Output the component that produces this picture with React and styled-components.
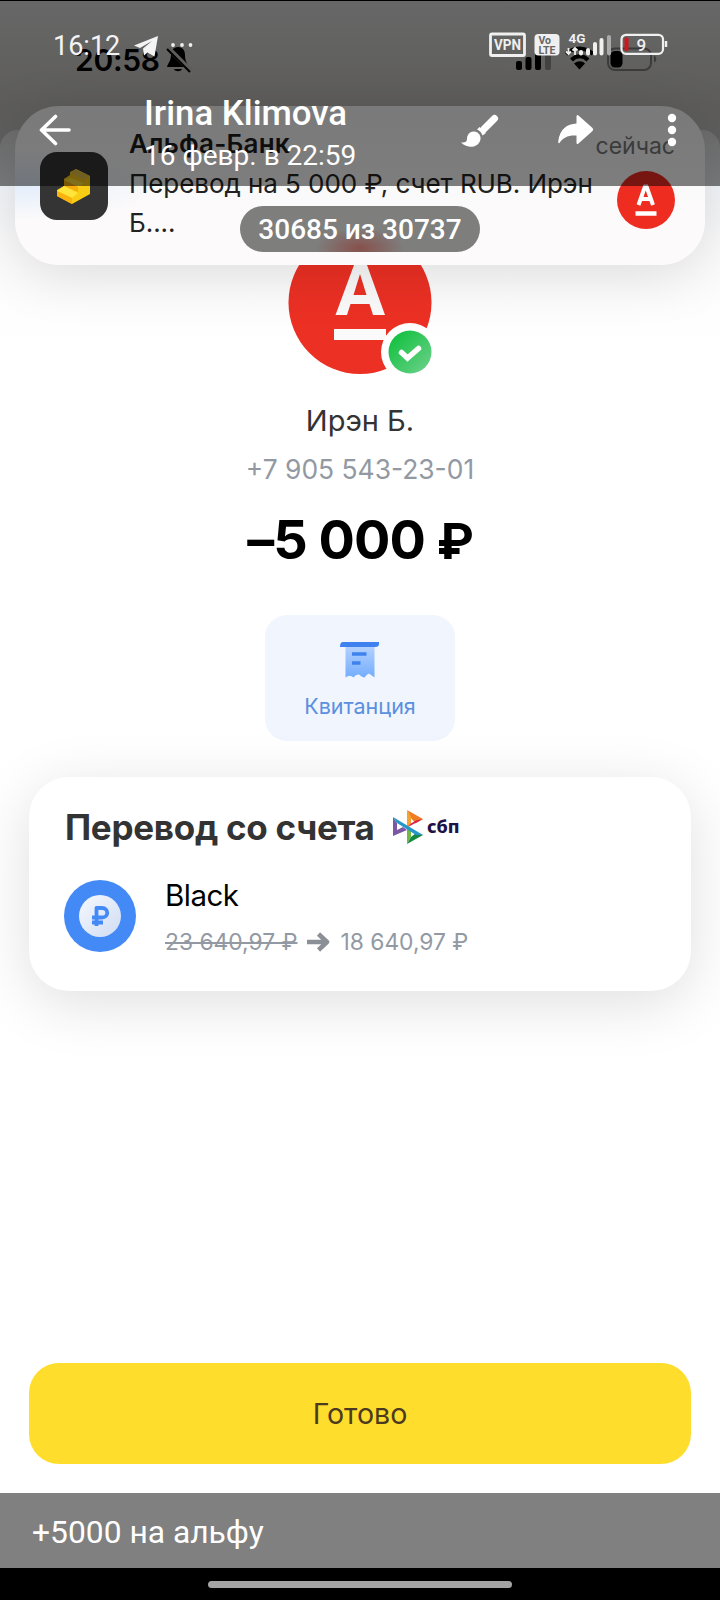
import styled, { createGlobalStyle } from 'styled-components';


const App = () => {
  return (
    <Viewer>
      <GlobalStyle />
      <Photo>
        <PhoneStatus>
          <PhoneTime>20:58</PhoneTime>
          <BellOff />
          <PhoneSignal />
        </PhoneStatus>
        <NoticeStack>
          <NoticeBehind />
          <Notice>
            <AppIcon />
            <NoticeText>
              <NoticeTitle>Альфа-Банк</NoticeTitle>
              <NoticeBody>Перевод на 5 000 ₽, счет RUB. Ирэн<br />Б....</NoticeBody>
            </NoticeText>
            <NoticeSide>
              <NoticeTime>сейчас</NoticeTime>
              <AlfaBadge />
            </NoticeSide>
          </Notice>
        </NoticeStack>
        <Recipient>
          <AlfaLogo />
          <Name>Ирэн Б.</Name>
          <Phone>+7 905 543-23-01</Phone>
          <Amount>–5 000 <span>₽</span></Amount>
          <Receipt>
            <ReceiptIcon />
            <span>Квитанция</span>
          </Receipt>
        </Recipient>
        <Account>
          <AccountHead>
            <AccountTitle>Перевод со счета</AccountTitle>
            <SbpLogo />
            <SbpText>сбп</SbpText>
          </AccountHead>
          <AccountRow>
            <Coin />
            <div>
              <CardName>Black</CardName>
              <Balance>
                <s>23 640,97 ₽</s>
                <svg width="24" height="20" viewBox="0 0 24 20">
                  <path d="M1 10H20M12.500 2L21 10L12.500 18" fill="none" stroke="#8b9096" strokeWidth="4.500" strokeLinejoin="round" />
                </svg>
                <span>18 640,97 ₽</span>
              </Balance>
            </div>
          </AccountRow>
        </Account>
        <Done>Готово</Done>
      </Photo>
      <Caption>+5000 на альфу</Caption>
      <NavBar><Handle /></NavBar>
      <Header>
        <StatusBar>
          <Clock>16:12</Clock>
          <StatusLeft />
          <StatusRight />
        </StatusBar>
        <Toolbar>
          <BackIcon />
          <Sender>
            <SenderName>Irina Klimova</SenderName>
            <SentAt>16 февр. в 22:59</SentAt>
          </Sender>
          <BrushIcon />
          <ShareIcon />
          <MoreIcon />
        </Toolbar>
      </Header>
      <Counter>30685 из 30737</Counter>
    </Viewer>
  )
}

const BellOff = () => (
  <svg width="28" height="30" viewBox="0 0 28 30">
    <path d="M13 2C8 2 6 6 6 10C6 16 3 18 2 22H24C22 18 20 16 20 10C20 6 18 2 13 2Z" fill="#000" />
    <path d="M9 24H17C16 27 10 27 9 24Z" fill="#000" />
    <path d="M3 3L26 26" stroke="#bdbbb7" strokeWidth="5" />
    <path d="M2 4L25 27" stroke="#000" strokeWidth="2" />
  </svg>
)

const PhoneSignal = () => (
  <svg width="144" height="26" viewBox="0 0 144 26">
    <rect x="0" y="16" width="6" height="9" rx="2" />
    <rect x="9.500" y="12" width="6" height="13" rx="2" />
    <rect x="19" y="7" width="6" height="18" rx="2" />
    <rect x="29" y="3" width="6" height="22" rx="2" fill="#858585" />
    <g fill="none" stroke="#000" strokeWidth="4">
      <path d="M50 9C58 1.500 69 1.500 77 9" />
      <path d="M55.500 15C60.500 10 67 10 72 15" />
    </g>
    <path d="M58 18.500C62 15.500 66 15.500 69 18.500L63.500 24.500Z" />
    <rect x="92" y="3.500" width="43" height="21.500" rx="7" fill="none" stroke="#777" strokeWidth="2" />
    <rect x="94.500" y="6" width="12" height="16.500" rx="4.500" />
    <path d="M138 10.500C141 11.500 141 16.500 138 17.500Z" fill="#777" />
  </svg>
)

const AppIcon = () => (
  <svg width="68" height="68" viewBox="0 0 68 68">
    <rect width="68" height="68" rx="17" fill="#343434" />
    <path d="M36 17L50 24V42L32 52L17 44V38L24 34V27L30 23V20Z" fill="#f9cd13" />
    <path d="M36 17L50 24L44 28L30 21Z" fill="#e2c044" />
    <path d="M30 21L44 28V33L24 28V27L30 24Z" fill="#f5c51d" />
    <path d="M24 28L38 35L44 31L31 26Z" fill="#ffdf35" />
    <path d="M24 28L38 35V40L24 34Z" fill="#f5ad0e" />
    <path d="M17 39L24 34L38 41L32 46Z" fill="#ffe43c" />
    <path d="M17 39L32 46V52L17 44Z" fill="#fbb20c" />
  </svg>
)

const AlfaBadge = () => (
  <svg width="58" height="58" viewBox="0 0 58 58">
    <circle cx="29" cy="29" r="29" fill="#ee2c20" />
    <path d="M21.500 34L28 15.500H29.500L36 34M24.500 28H33.500" fill="none" stroke="#fff" strokeWidth="4" />
    <path d="M18.500 42.500H39.500" stroke="#fff" strokeWidth="4.500" />
  </svg>
)

const AlfaLogo = () => (
  <svg width="144" height="110" viewBox="0 0 144 110">
    <circle cx="72" cy="37.500" r="71.500" fill="#ec3024" />
    <path fillRule="evenodd" d="M47.500 50L66 0H79L97 50H85L81.500 39H62.500L59 50ZM65.500 30H78.500L72 9Z" fill="#fafafa" />
    <path d="M46 69.500H98" stroke="#fafafa" strokeWidth="11" />
    <circle cx="122" cy="87" r="29" fill="#fff" />
    <circle cx="122" cy="87" r="21.500" fill="url(#ok)" />
    <path d="M113.500 87.500L119.500 93L130.500 83.500" fill="none" stroke="#fff" strokeWidth="5.500" strokeLinecap="round" />
    <defs>
      <linearGradient id="ok" x1="0" y1="0" x2="1" y2="1">
        <stop offset="0.1" stopColor="#12c13f" />
        <stop offset="1" stopColor="#70d18e" />
      </linearGradient>
    </defs>
  </svg>
)

const ReceiptIcon = () => (
  <svg width="42" height="40" viewBox="0 0 42 40">
    <path d="M6.500 6H35.500V37.500L30 33.500Q28 34 25.500 37.500Q24 38 20 34.500Q17 34 14.500 37.500Q11 34 6.500 37.500Z" fill="url(#paper)" />
    <path d="M4 2H40Q41 7 36 7H1Q1 2 4 2Z" fill="#3f82ee" />
    <path d="M13 14H27.500M13 23H21.500" stroke="#3f82ee" strokeWidth="3.500" />
    <defs>
      <linearGradient id="paper" x1="0" y1="0" x2="0" y2="1">
        <stop offset="0" stopColor="#b4d2ff" />
        <stop offset="1" stopColor="#74acfc" />
      </linearGradient>
    </defs>
  </svg>
)

const SbpLogo = () => (
  <svg width="31" height="36" viewBox="0 0 31 36">
    <path d="M0 8L4 14V21L10 18L14 21L0 27Z" fill="#7b57a4" />
    <path d="M14 1L30 10L22.500 14.500L18 9Z" fill="#f07d22" />
    <path d="M14 1V18L18 15.500V8Z" fill="#f6a22c" />
    <path d="M30 10L14 18.500L18 14.500L23 11.500Z" fill="#dd1b54" />
    <path d="M14 35V20L18 22V28Z" fill="#75b843" />
    <path d="M14 35L30 26L23 24L18 28Z" fill="#138a43" />
    <path d="M0 8L30 26H23L4 14Z" fill="#2598c9" />
  </svg>
)

const Coin = () => (
  <svg width="72" height="72" viewBox="0 0 72 72">
    <circle cx="36" cy="36" r="36" fill="#438af7" />
    <circle cx="36" cy="36" r="21" fill="url(#coin)" />
    <path d="M32.500 46V28H38C45 28 45 37.500 38 37.500H28M28 42.500H39" fill="none" stroke="#438af7" strokeWidth="3.800" strokeLinejoin="round" />
    <defs>
      <linearGradient id="coin" x1="0" y1="0" x2="1" y2="1">
        <stop offset="0" stopColor="#f6f9fe" />
        <stop offset="1" stopColor="#cfdcf3" />
      </linearGradient>
    </defs>
  </svg>
)

const StatusLeft = () => (
  <svg width="62" height="26" viewBox="0 0 62 26">
    <path d="M1 13.500L25 4L21.500 24.500L14.500 20.500L11 23.500L10 16.500L19 9L7 16Z" fill="#f4f4f4" />
    <circle cx="40" cy="13" r="1.900" fill="#eee" />
    <circle cx="49" cy="13" r="1.900" fill="#eee" />
    <circle cx="57.500" cy="13" r="1.900" fill="#eee" />
  </svg>
)

const StatusRight = () => (
  <svg width="180" height="26" viewBox="0 0 180 26" fontFamily="Roboto" fontWeight="700" overflow="visible">
    <rect x="1.500" y="2" width="34" height="21.500" rx="1.500" fill="none" stroke="#f0f0f0" strokeWidth="2.800" />
    <text x="5" y="17.500" fontSize="14" textLength="27" lengthAdjust="spacingAndGlyphs" fill="#f0f0f0">VPN</text>
    <rect x="45.500" y="2" width="25" height="21.500" rx="4" fill="#f0f0f0" />
    <text x="49.500" y="11.500" fontSize="10.500" fill="#666">Vo</text>
    <text x="49.500" y="21.500" fontSize="10.500" textLength="17" lengthAdjust="spacingAndGlyphs" fill="#666">LTE</text>
    <text x="79.500" y="10.800" fontSize="13.500" textLength="17" lengthAdjust="spacingAndGlyphs" fill="#f0f0f0">4G</text>
    <path d="M79.500 16V22M77 19.500L79.500 22L82 19.500M86 23V16M83.500 18.500L86 16L88.500 18.500" fill="none" stroke="#f0f0f0" strokeWidth="1.800" />
    <path d="M92 21.500V20M99 21.500V18M106 21.500V12M112.500 21.500V8" stroke="#f0f0f0" strokeWidth="4" strokeLinecap="round" />
    <path d="M120 21.500V5" stroke="#aaa" strokeWidth="4" strokeLinecap="round" />
    <rect x="132.500" y="2.800" width="41.500" height="19" rx="4.500" fill="none" stroke="#f0f0f0" strokeWidth="2.200" />
    <rect x="135.500" y="5.500" width="4" height="13.500" rx="1" fill="#d0181c" />
    <text x="147.500" y="18.500" fontSize="17" fontWeight="500" fill="#f0f0f0">9</text>
    <path d="M177 9V15" stroke="#f0f0f0" strokeWidth="2.500" />
  </svg>
)

const BackIcon = () => (
  <svg width="32" height="32" viewBox="0 0 32 32">
    <path d="M30 16H3M16.500 2.500L2.500 16L16.500 29.500" fill="none" stroke="#fff" strokeWidth="3.600" strokeLinecap="round" strokeLinejoin="round" />
  </svg>
)

const BrushIcon = () => (
  <svg width="38" height="34" viewBox="0 0 38 34">
    <path d="M33.500 4.500L23 15" stroke="#fff" strokeWidth="7" strokeLinecap="round" />
    <path d="M18.500 13L25 19L21.500 21.500Q20 17 16 15.500Z" fill="#fff" />
    <path d="M6 25C6 20 9.500 17 13.500 17.500C17 18 20 21 19.500 25C18.500 33 8 36 0 28.500C3.500 28.500 6 28 6 25Z" fill="#fff" />
  </svg>
)

const ShareIcon = () => (
  <svg width="36" height="32" viewBox="0 0 36 32">
    <path d="M18.500 2.500Q18.500 0 20.500 1.500L34.500 14Q36 15.500 34.500 17L20.500 29.500Q18.500 31 18.500 28.500V21.500C10 21 5 23.500 1.500 29Q0 30 .3 27C2 15 9 10 18.500 9.500Z" fill="#fff" />
  </svg>
)

const MoreIcon = () => (
  <svg width="10" height="34" viewBox="0 0 10 34">
    <circle cx="5" cy="5" r="4.200" fill="#fff" />
    <circle cx="5" cy="17" r="4.200" fill="#fff" />
    <circle cx="5" cy="29" r="4.200" fill="#fff" />
  </svg>
)

const GlobalStyle = createGlobalStyle`
  * {
    box-sizing: border-box;
  }
  body {
    margin: 0;
    background: #000;
  }
  svg {
    display: block;
    flex: none;
  }
`;

const Viewer = styled.div`
  position: relative;
  width: 720px;
  height: 1600px;
  padding-top: 1px;
  display: flex;
  flex-direction: column;
  overflow: hidden;
  background: #000;
  font-family: Roboto, sans-serif;
  white-space: nowrap;
`;

const Photo = styled.div`
  height: 1492px;
  display: flex;
  flex-direction: column;
  overflow: hidden;
  background: linear-gradient(#cfcfcf 0, #bab9b5 105px, #bcbcbc 135px, #f4f4f4 187px, #fafafa 230px, #fff 345px);
  font-family: Inter, sans-serif;
`;

const PhoneStatus = styled.div`
  height: 105px;
  padding: 44px 60px 0 75px;
  display: flex;
  align-items: flex-start;
`;

const PhoneTime = styled.div`
  width: 90px;
  font-size: 30px;
  font-weight: 600;
  line-height: 30px;
  letter-spacing: -0.3px;
  color: #000;

  & + svg {
    margin-right: auto;
  }
`;

const NoticeStack = styled.div`
  position: relative;
  height: 159px;
  padding: 0 15px;
`;

const NoticeBehind = styled.div`
  position: absolute;
  left: 0;
  right: 0;
  top: 24px;
  height: 110px;
  border-radius: 18px;
  background: linear-gradient(#d8d8d8, #f3f6fa 58px, rgba(250, 250, 250, 0));
`;

const Notice = styled.div`
  position: relative;
  height: 159px;
  padding: 0 30px 0 25px;
  display: flex;
  border-radius: 44px;
  background: radial-gradient(ellipse 130px 36px at 10px 78px, #e2edfb, rgba(226, 237, 251, 0)),
    linear-gradient(#f4f4f4, #fafafa 70px, #fcfafa 110px);
  box-shadow: 0 10px 56px rgba(0, 0, 0, 0.13);

  > svg {
    margin-top: 46px;
  }
`;

const NoticeText = styled.div`
  margin-left: 21px;
  padding-top: 19px;
  width: 482px;
`;

const NoticeTitle = styled.div`
  font-size: 26px;
  font-weight: 600;
  line-height: 38px;
  letter-spacing: 0.2px;
  color: #1c1c1c;
`;

const NoticeBody = styled.div`
  padding-top: 1px;
  font-size: 26px;
  line-height: 39px;
  letter-spacing: -0.06px;
  color: #222;
`;

const NoticeSide = styled.div`
  flex: 1;
  display: flex;
  flex-direction: column;
  align-items: flex-end;
`;

const NoticeTime = styled.div`
  margin: 25px 0 9px;
  font-size: 23px;
  line-height: 31px;
  color: #777;
`;

const Recipient = styled.div`
  height: 512px;
  display: flex;
  flex-direction: column;
  align-items: center;
`;

const Name = styled.div`
  margin-top: 28px;
  font-size: 29px;
  line-height: 36px;
  color: #333;
`;

const Phone = styled.div`
  margin-top: 14px;
  font-size: 26.4px;
  line-height: 32px;
  color: #9299a2;
`;

const Amount = styled.div`
  margin-top: 25px;
  font-size: 54px;
  font-weight: 700;
  line-height: 60px;
  letter-spacing: -1px;
  color: #000;

  span {
    font-size: 50px;
  }
`;

const Receipt = styled.div`
  margin-top: 44px;
  width: 190px;
  height: 126px;
  padding-top: 25px;
  display: flex;
  flex-direction: column;
  align-items: center;
  gap: 12px;
  border-radius: 22px;
  background: #f0f5fe;
  font-size: 21.5px;
  line-height: 28px;
  color: #5b90df;
`;

const Account = styled.div`
  height: 214px;
  margin: 0 29px;
  padding: 30px 35px;
  border-radius: 40px;
  background: #fff;
  box-shadow: 0 12px 60px rgba(0, 0, 0, 0.13);
`;

const AccountHead = styled.div`
  height: 40px;
  display: flex;
  align-items: center;
`;

const AccountTitle = styled.div`
  width: 329px;
  padding-left: 1px;
  font-size: 35px;
  font-weight: 700;
  letter-spacing: -0.28px;
  color: #333;
`;

const SbpText = styled.div`
  margin: -3px 0 0 3px;
  font-family: "Noto Sans", sans-serif;
  font-size: 18px;
  font-weight: 800;
  line-height: 20px;
  color: #1d1346;
`;

const AccountRow = styled.div`
  margin-top: 33px;
  display: flex;
  gap: 29px;
`;

const CardName = styled.div`
  margin-top: -3px;
  font-size: 29.5px;
  line-height: 36px;
  letter-spacing: -0.5px;
  color: #000;
`;

const Balance = styled.div`
  margin-top: 15px;
  display: flex;
  align-items: center;
  font-size: 22.8px;
  line-height: 28px;
  color: #9299a2;

  svg {
    margin: 0 10px 0 9px;
  }
`;

const Done = styled.div`
  margin: 372px 29px 0;
  height: 101px;
  display: flex;
  align-items: center;
  justify-content: center;
  border-radius: 30px;
  background: #ffdd2d;
  font-size: 28.6px;
  color: #4a3a20;
`;

const Caption = styled.div`
  height: 75px;
  padding-left: 32px;
  background: #808080;
  font-size: 31.8px;
  line-height: 79px;
  color: #fff;
`;

const NavBar = styled.div`
  height: 32px;
  padding-top: 13px;
  display: flex;
  justify-content: center;
  background: #000;
`;

const Handle = styled.div`
  width: 304px;
  height: 7px;
  border-radius: 4px;
  background: #a3a3a3;
`;

/* dark bar lying over the top of the photo */
const Header = styled.div`
  position: absolute;
  left: 0;
  top: 0;
  width: 720px;
  height: 186px;
  background: rgba(0, 0, 0, 0.5);
  color: #fff;
`;

const StatusBar = styled.div`
  height: 92px;
  padding: 32px 51px 0 53px;
  display: flex;
  align-items: flex-start;
  justify-content: space-between;

  svg:last-child {
    margin-left: auto;
  }
`;

const Clock = styled.div`
  width: 80px;
  font-size: 27px;
  line-height: 29px;
  color: #f4f4f4;
`;

const Toolbar = styled.div`
  height: 94px;
  padding: 0 43px 0 39px;
  display: flex;
  align-items: flex-start;

  svg {
    margin-top: 22px;
  }
  svg:first-child {
    margin-right: 73px;
  }
  svg:nth-child(3) {
    margin-right: 59px;
  }
  svg:last-child {
    margin-left: auto;
    margin-top: 21px;
  }
`;

const Sender = styled.div`
  width: 317px;
`;

const SenderName = styled.div`
  font-size: 34.8px;
  font-weight: 500;
  line-height: 42px;
`;

const SentAt = styled.div`
  padding-top: 1px;
  font-size: 28px;
  line-height: 42px;
`;

const Counter = styled.div`
  position: absolute;
  left: 240px;
  top: 206px;
  width: 240px;
  height: 46px;
  border-radius: 23px;
  background: radial-gradient(ellipse 44px 20px at 120px 42px, #88504b, rgba(136, 80, 75, 0)), #7e7e7d;
  font-size: 28px;
  font-weight: 500;
  line-height: 47px;
  text-align: center;
  color: #fff;
`;


export default App
